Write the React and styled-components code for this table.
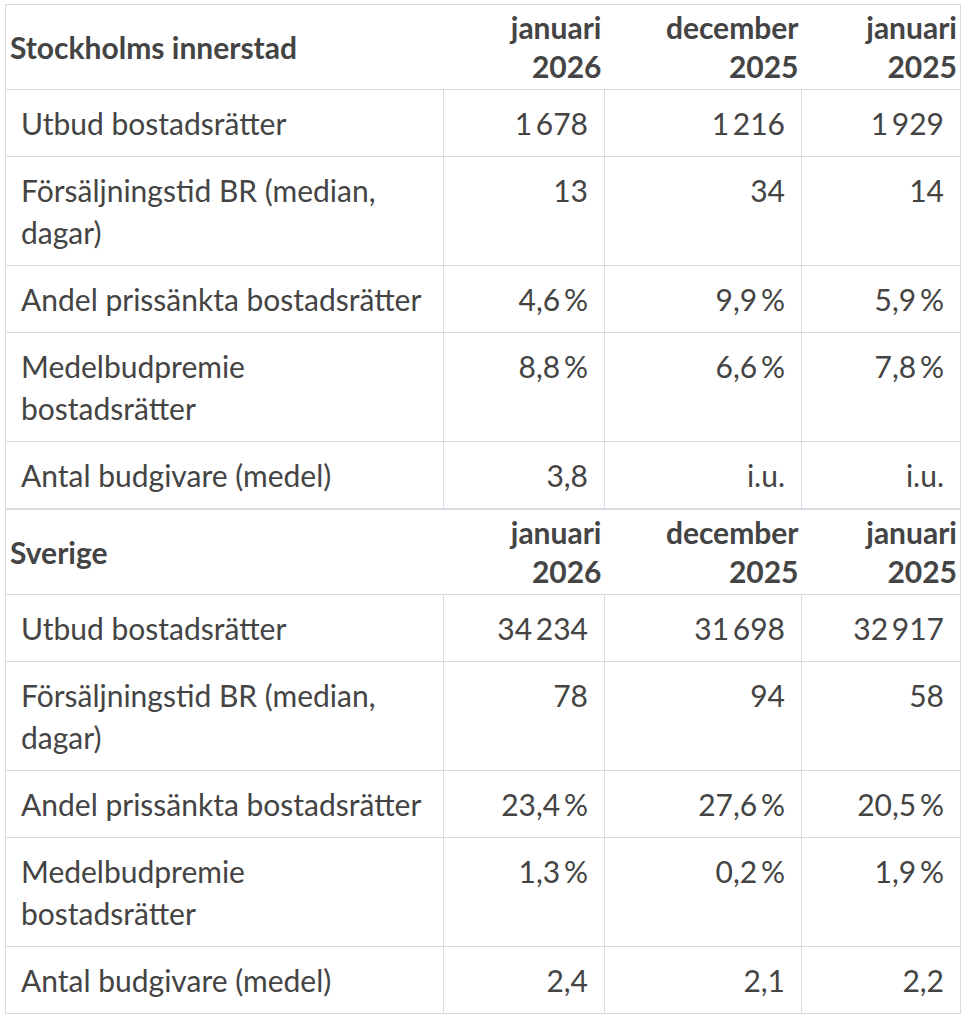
import React from 'react';
import styled, { createGlobalStyle } from 'styled-components';

const GlobalStyle = createGlobalStyle`
  body {
    margin: 0;
    background: #ffffff;
    font-family: Lato, "Open Sans", sans-serif;
    color: #444444;
  }
`;

const Page = styled.div`
  padding: 4px 9px 8px 5px;
  width: 955px;
`;

const Table = styled.table`
  width: 955px;
  border-collapse: collapse;
  table-layout: fixed;
  border: 1px solid #dadae2;
  font-size: 30px;
`;

const Col = styled.col`
  width: ${(p) => p.$width}px;
`;

const HeadCell = styled.th`
  font-weight: 700;
  line-height: 39px;
  padding: 3px 3px 3px 4px;
  text-align: ${(p) => (p.$first ? 'left' : 'right')};
  border-bottom: 1px solid #dadae2;
  vertical-align: middle;
  color: #444444;
`;

const Cell = styled.td`
  font-weight: 400;
  line-height: 42px;
  padding: 12px ${(p) => (p.$first ? 20 : 16)}px 12px 15px;
  text-align: ${(p) => (p.$first ? 'left' : 'right')};
  white-space: ${(p) => (p.$first ? 'normal' : 'nowrap')};
  border: 1px solid #dadae2;
  vertical-align: top;
`;

const sp = '\u2009';

const sections = [
  {
    title: 'Stockholms innerstad',
    rows: [
      ['Utbud bostadsrätter', `1${sp}678`, `1${sp}216`, `1${sp}929`],
      ['Försäljningstid BR (median, dagar)', '13', '34', '14'],
      ['Andel prissänkta bostadsrätter', `4,6${sp}%`, `9,9${sp}%`, `5,9${sp}%`],
      ['Medelbudpremie bostadsrätter', `8,8${sp}%`, `6,6${sp}%`, `7,8${sp}%`],
      ['Antal budgivare (medel)', '3,8', 'i.u.', 'i.u.'],
    ],
  },
  {
    title: 'Sverige',
    rows: [
      ['Utbud bostadsrätter', `34${sp}234`, `31${sp}698`, `32${sp}917`],
      ['Försäljningstid BR (median, dagar)', '78', '94', '58'],
      ['Andel prissänkta bostadsrätter', `23,4${sp}%`, `27,6${sp}%`, `20,5${sp}%`],
      ['Medelbudpremie bostadsrätter', `1,3${sp}%`, `0,2${sp}%`, `1,9${sp}%`],
      ['Antal budgivare (medel)', '2,4', '2,1', '2,2'],
    ],
  },
];

const periods = [
  ['januari', '2026'],
  ['december', '2025'],
  ['januari', '2025'],
];

const columnWidths = [438, 161, 197, 159];

const StatsTable = ({ title, rows }) => (
  <Table>
    <colgroup>
      {columnWidths.map((w, i) => (
        <Col key={i} $width={w} />
      ))}
    </colgroup>
    <thead>
      <tr>
        <HeadCell $first>{title}</HeadCell>
        {periods.map(([month, year], i) => (
          <HeadCell key={i}>
            {month}
            <br />
            {year}
          </HeadCell>
        ))}
      </tr>
    </thead>
    <tbody>
      {rows.map((row) => (
        <tr key={row[0]}>
          {row.map((value, i) => (
            <Cell key={i} $first={i === 0}>
              {value}
            </Cell>
          ))}
        </tr>
      ))}
    </tbody>
  </Table>
);

export default function App() {
  return (
    <Page>
      <GlobalStyle />
      {sections.map((s) => (
        <StatsTable key={s.title} title={s.title} rows={s.rows} />
      ))}
    </Page>
  );
}
